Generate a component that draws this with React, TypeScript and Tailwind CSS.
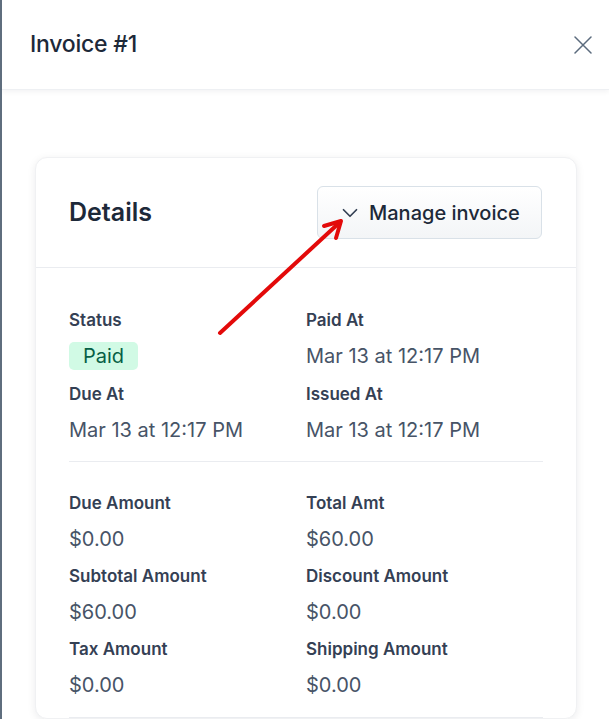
import React from 'react';
import { ChevronDown } from 'lucide-react';

// ── Field ───────────────────────────────────────────────────────────────────

interface FieldProps {
  label: string;
  children: React.ReactNode;
}

function Field({ label, children }: FieldProps) {
  return (
    <div className="flex flex-col">
      <span className="text-[17px] leading-[22px] font-semibold text-[#344054]">{label}</span>
      <div className="mt-[11px] h-[28px] flex items-center text-[20px] leading-[28px] text-[#475467]">
        {children}
      </div>
    </div>
  );
}

// ── Annotation arrow ────────────────────────────────────────────────────────

function Arrow() {
  return (
    <svg
      className="absolute inset-0 pointer-events-none"
      width="609"
      height="719"
      viewBox="0 0 609 719"
      fill="none"
    >
      <g stroke="#e30a0a" strokeWidth="4" strokeLinecap="round" strokeLinejoin="round">
        <line x1="218" y1="333" x2="337" y2="223" />
        <polyline points="322,226 339,221 334,238" />
      </g>
    </svg>
  );
}

export default function App() {
  const dates = [
    { label: 'Due At', value: 'Mar 13 at 12:17 PM' },
    { label: 'Issued At', value: 'Mar 13 at 12:17 PM' },
  ];

  const amounts = [
    { label: 'Due Amount', value: '$0.00' },
    { label: 'Total Amt', value: '$60.00' },
    { label: 'Subtotal Amount', value: '$60.00' },
    { label: 'Discount Amount', value: '$0.00' },
    { label: 'Tax Amount', value: '$0.00' },
    { label: 'Shipping Amount', value: '$0.00' },
  ];

  return (
    <div
      className="relative h-[719px] overflow-hidden bg-white border-l-2 border-[#5f6e7e]"
      style={{ fontFamily: 'Inter, "Noto Sans", sans-serif' }}
    >
      {/* header */}
      <header className="h-[90px] flex items-center justify-between pl-[28px] pr-[17px] border-b border-[#eef0f3] shadow-[0_2px_5px_rgba(16,24,40,0.05)]">
        <h1 className="text-[23px] font-medium text-[#1d2939] tracking-[-0.01em]">Invoice #1</h1>
        <svg width="18" height="18" viewBox="0 0 18 18" fill="none" className="text-[#5b6b7d]">
          <path d="M1 1L17 17M17 1L1 17" stroke="currentColor" strokeWidth="1.5" strokeLinecap="round" />
        </svg>
      </header>

      {/* card */}
      <div className="ml-[33px] mt-[67px] w-[542px] bg-white rounded-[12px] border border-[#f0f1f3] shadow-[0_2px_8px_rgba(16,24,40,0.08)]">
        <div className="h-[110px] flex items-center justify-between pl-[33px] pr-[34px] border-b border-[#eaecf0]">
          <h2 className="text-[25px] font-semibold text-[#1d2939]">Details</h2>
          <button className="h-[53px] w-[225px] flex items-center gap-[6px] pl-[19px] rounded-[6px] border border-[#d9e1e8] bg-gradient-to-b from-white to-[#f3f5f7] text-[20px] font-medium text-[#1d2939]">
            <ChevronDown className="w-[26px] h-[26px] text-[#344054]" strokeWidth={1.6} />
            <span>Manage invoice</span>
          </button>
        </div>

        <div className="px-[33px]">
          <div className="pt-[41px] pb-[17px] border-b border-[#eaecf0] grid grid-cols-2 gap-y-[13px]">
            <Field label="Status">
              <span className="px-[14px] rounded-[5px] bg-[#d1fae5] text-[#065f46]">Paid</span>
            </Field>
            <Field label="Paid At">Mar 13 at 12:17 PM</Field>
            {dates.map((d) => (
              <Field key={d.label} label={d.label}>
                {d.value}
              </Field>
            ))}
          </div>

          <div className="pt-[30px] pb-[18px] border-b border-[#eaecf0] grid grid-cols-2 gap-y-[12px]">
            {amounts.map((a) => (
              <Field key={a.label} label={a.label}>
                {a.value}
              </Field>
            ))}
          </div>
        </div>
      </div>

      <Arrow />
    </div>
  );
}
